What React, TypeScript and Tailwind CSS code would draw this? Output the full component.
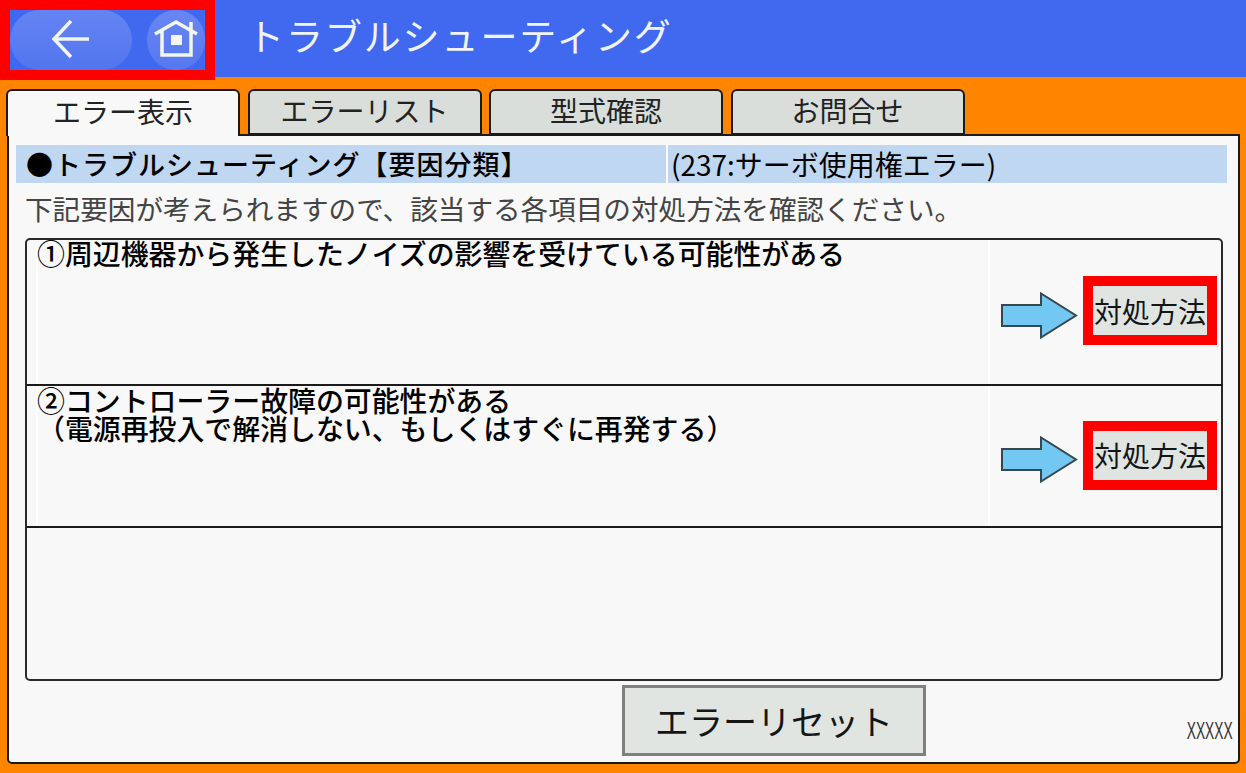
const jp = { fontFamily: '"Noto Sans CJK JP", "Noto Sans", sans-serif' };

const tabs = ['エラー表示', 'エラーリスト', '型式確認', 'お問合せ'];

function BlueArrow() {
  return (
    <svg width="78" height="48" viewBox="0 0 78 48" className="shrink-0 mt-[10px]">
      <polygon points="1,13 40,13 40,1.5 75,23.5 40,45.5 40,34 1,34" fill="#72c8f2" stroke="#37474f" strokeWidth="2" strokeLinejoin="miter" />
    </svg>
  );
}

function FixButton() {
  return (
    <div className="w-[134px] h-[69px] shrink-0 border-[10px] border-[#ff0000] bg-[#e0e5e2] flex items-center justify-center text-[28px] text-[#151515] whitespace-nowrap">
      対処方法
    </div>
  );
}

function Row({ className, pad, children }: { className: string; pad: string; children: React.ReactNode }) {
  return (
    <div className={`flex -mr-[2px] ${className}`}>
      <div className="ml-[9px] w-[954px] shrink-0 border-x-2 border-white text-[27.9px] leading-[28px] text-black font-medium whitespace-nowrap">
        {children}
      </div>
      <div className={`flex-1 flex items-center pl-[11px] gap-[4px] ${pad}`}>
        <BlueArrow />
        <FixButton />
      </div>
    </div>
  );
}

export default function App() {
  return (
    <div className="w-[1246px] h-[773px] bg-[#ff8500] flex flex-col overflow-hidden" style={jp}>
      {/* Header */}
      <div className="h-[77px] shrink-0 bg-[#4169f0] flex items-start">
        <div className="relative h-[80px] w-[215px] shrink-0 border-[10px] border-[#ff0000] bg-[#4169f0] flex gap-[10px]">
          <div className="w-[122px] h-[60px] shrink-0 rounded-[30px] bg-linear-to-b from-[#6584f3] to-[#5275ef] flex items-center justify-center">
            <svg width="42" height="42" viewBox="0 0 42 42" fill="none" stroke="#f2f4f0" strokeWidth="3.5" className="mb-[2px]">
              <path d="M39 21H4M21 3L4 21l17 18" />
            </svg>
          </div>
          <div className="w-[63px] h-[60px] shrink-0 flex items-center justify-end">
            <div className="w-[58px] h-[60px] rounded-full bg-linear-to-b from-[#6986f3] to-[#5678ef] flex items-center justify-center">
              <svg width="46" height="38" viewBox="0 0 46 38" fill="none" stroke="#f4f6f2" strokeWidth="3.5" className="mb-[4px]">
                <path d="M2 15L23 3l21 12M9 11v25h29V11M38 3v8" />
                <rect x="18" y="16" width="11" height="10" fill="#f4f6f2" stroke="none" />
              </svg>
            </div>
          </div>
        </div>
        <div className="ml-[32px] h-[77px] flex items-center pb-[5px] text-[37px] tracking-[1.9px] text-[#f0f3f8]">
          トラブルシューティング
        </div>
      </div>

      {/* Tabs */}
      <div className="flex mt-[12px] ml-[6px] h-[46px] shrink-0">
        {tabs.map((t, i) => (
          <div
            key={t}
            className={`w-[234px] mr-[7.5px] rounded-t-[6px] border-2 border-[#1a1a1a] flex items-center justify-center text-[28px] text-[#222] relative ${
              i === 0 ? 'bg-[#f8f8f8] border-b-0 h-[47px] z-10 pb-[6px]' : 'bg-[#d9dedb] h-[46px] pb-[4px]'
            }`}
          >
            {t}
          </div>
        ))}
      </div>

      {/* Panel */}
      <div className="ml-[7px] w-[1233px] h-[630px] shrink-0 -mt-[1px] bg-[#f8f8f8] border-2 border-[#1a1a1a] rounded-b-[5px] flex flex-col pl-[7px] pr-[11px] pt-[9px]">
        <div className="h-[38px] w-[1211px] shrink-0 bg-[#bfd7f0] flex items-center text-black text-[27px] whitespace-nowrap">
          <div className="w-[650px] pl-[10px] font-medium tracking-[1px]">●トラブルシューティング【要因分類】</div>
          <div className="flex-1 h-full border-l-2 border-white pl-[3px] flex items-center text-[28px]">(237:サーボ使用権エラー)</div>
        </div>
        <div className="h-[55px] shrink-0 pl-[9px] pb-[3px] flex items-center text-[27.6px] text-[#444] whitespace-nowrap">
          下記要因が考えられますので、該当する各項目の対処方法を確認ください。
        </div>

        <div className="ml-[9px] w-[1198px] h-[443px] shrink-0 border-2 border-[#2a2a2a] rounded-[5px] flex flex-col">
          <Row className="h-[146px] border-b-2 border-[#1a1a1a]" pad="pb-[3px]">
            <div className="-ml-[1px] -mt-[1px]">①周辺機器から発生したノイズの影響を受けている可能性がある</div>
          </Row>
          <Row className="h-[142px] border-b-2 border-[#1a1a1a]" pad="pb-[2px]">
            <div className="-ml-[1px]">②コントローラー故障の可能性がある</div>
            <div className="-ml-[1px]">（電源再投入で解消しない、もしくはすぐに再発する）</div>
          </Row>
        </div>

        <div className="flex-1 relative flex justify-start">
          <div className="ml-[606px] mt-[4px] w-[304px] h-[71px] border-[3px] border-[#808080] bg-[#e0e5e2] flex items-center justify-center text-[34px] text-[#151515]">
            エラーリセット
          </div>
          <div className="absolute right-[-6px] top-[37px] text-[23px] leading-[26px] text-[#333] origin-right scale-x-[0.6]" style={{ fontFamily: '"Liberation Sans", sans-serif' }}>
            XXXXX
          </div>
        </div>
      </div>
    </div>
  );
}
